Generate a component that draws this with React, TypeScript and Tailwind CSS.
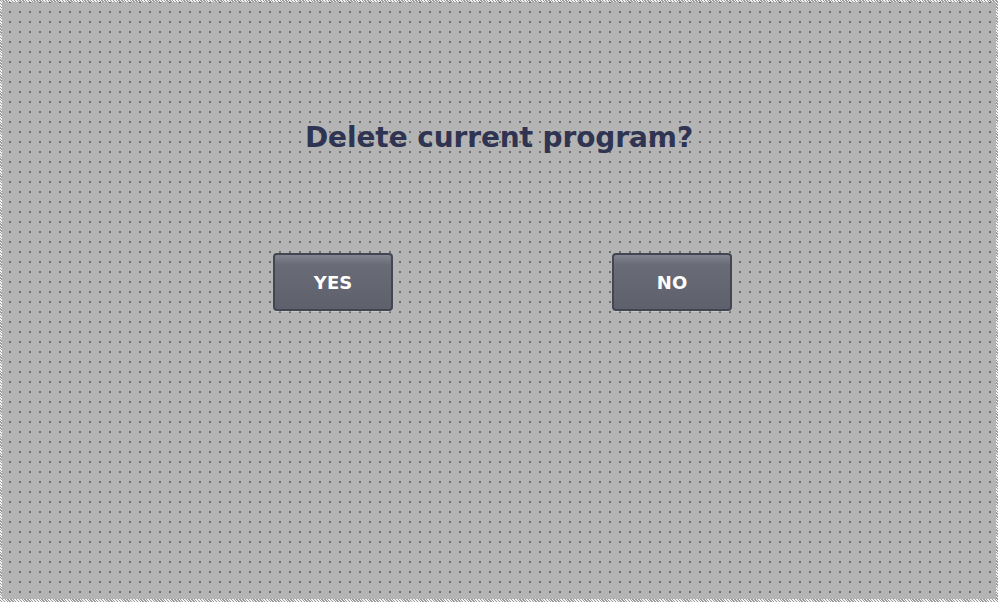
import React from "react";

export default function App() {
  return (
    <div className="w-[998px] h-[602px] p-[2px] pb-[3px] bg-[repeating-linear-gradient(45deg,#f4f4f4_0px,#f4f4f4_1px,#9a9a9a_1px,#9a9a9a_2px)]">
      <div className="w-full h-full flex flex-col bg-[#b4b4b4] bg-[linear-gradient(to_bottom,transparent_2px,#b4b4b4_2px),linear-gradient(to_right,#6e6e6e_2px,#b4b4b4_2px)] bg-size-[10px_10px] bg-position-[7px_9px]">
        <div className="pt-[116px] h-[40px] box-content flex justify-center">
          <h1
            className="text-[28px] leading-[40px] font-bold text-[#2f3452] tracking-[-0.1px]"
            style={{ fontFamily: "Tahoma, 'DejaVu Sans', sans-serif" }}
          >
            Delete current program?
          </h1>
        </div>
        <div className="mt-[95px] pl-[271px] flex gap-[219px]">
          {["YES", "NO"].map((t) => (
            <button
              key={t}
              className="w-[120px] h-[58px] rounded-[4px] border-2 border-[#414652] bg-[linear-gradient(to_bottom,#82848f_0%,#696b77_18%,#5e606c_100%)] shadow-[0_1px_0_rgba(255,255,255,0.25)] flex items-center justify-center text-white font-bold text-[18px]"
              style={{ fontFamily: "Tahoma, 'DejaVu Sans', sans-serif" }}
            >
              {t}
            </button>
          ))}
        </div>
      </div>
    </div>
  );
}
